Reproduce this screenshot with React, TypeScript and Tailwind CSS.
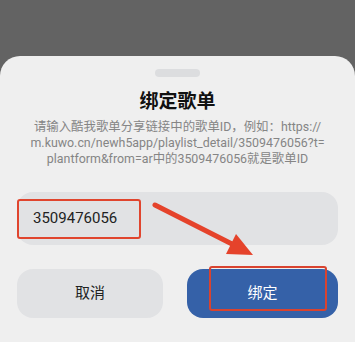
export default function App() {
  return (
    <div className="relative flex h-[342px] w-[355px] flex-col overflow-hidden bg-[#636363] font-['Roboto','Noto_Sans_CJK_SC',sans-serif]">
      <div className="h-[56px] shrink-0" />
      <div className="flex flex-1 flex-col items-center rounded-t-[20px] bg-[#efefef] px-[17px]">
        {/* drag handle */}
        <div className="mt-[13px] h-[8px] w-[45px] rounded-full bg-[#dcdddf]" />

        <h1 className="mt-[13px] text-[19px] font-bold leading-[24px] text-[#111]">绑定歌单</h1>
        <p className="mt-[5px] whitespace-nowrap text-center text-[12.4px] leading-[16px] text-[#858585]">
          请输入酷我歌单分享链接中的歌单ID，例如：https://
          <br />
          m.kuwo.cn/newh5app/playlist_detail/3509476056?t=
          <br />
          plantform&amp;from=ar中的3509476056就是歌单ID
        </p>

        {/* input */}
        <div className="mt-[25px] flex h-[53px] w-full items-center rounded-[16px] bg-[#e1e2e4]">
          <div className="flex h-[40px] w-[124px] items-center rounded-[3px] border-2 border-[#e0452e] pl-[14px] text-[15px] text-[#222]">
            3509476056
          </div>
        </div>

        {/* buttons */}
        <div className="mt-[24px] flex w-full gap-[24px]">
          <button className="h-[49px] w-[146px] rounded-[16px] bg-[#e1e2e4] text-[15px] text-[#222]">
            取消
          </button>
          <button className="relative h-[49px] flex-1 rounded-[16px] bg-[#3561a8] text-[15px] text-white">
            绑定
            <span className="absolute left-[22px] top-[-3px] h-[45px] w-[118px] rounded-[3px] border-2 border-[#d9432f]" />
          </button>
        </div>
      </div>

      {/* annotation arrow */}
      <svg className="pointer-events-none absolute inset-0" width="355" height="342" viewBox="0 0 355 342">
        <line x1="155" y1="205" x2="232" y2="244" stroke="#e5432b" strokeWidth="5" strokeLinecap="round" />
        <polygon points="253,255 226,254 236,234" fill="#e5432b" />
      </svg>
    </div>
  );
}
